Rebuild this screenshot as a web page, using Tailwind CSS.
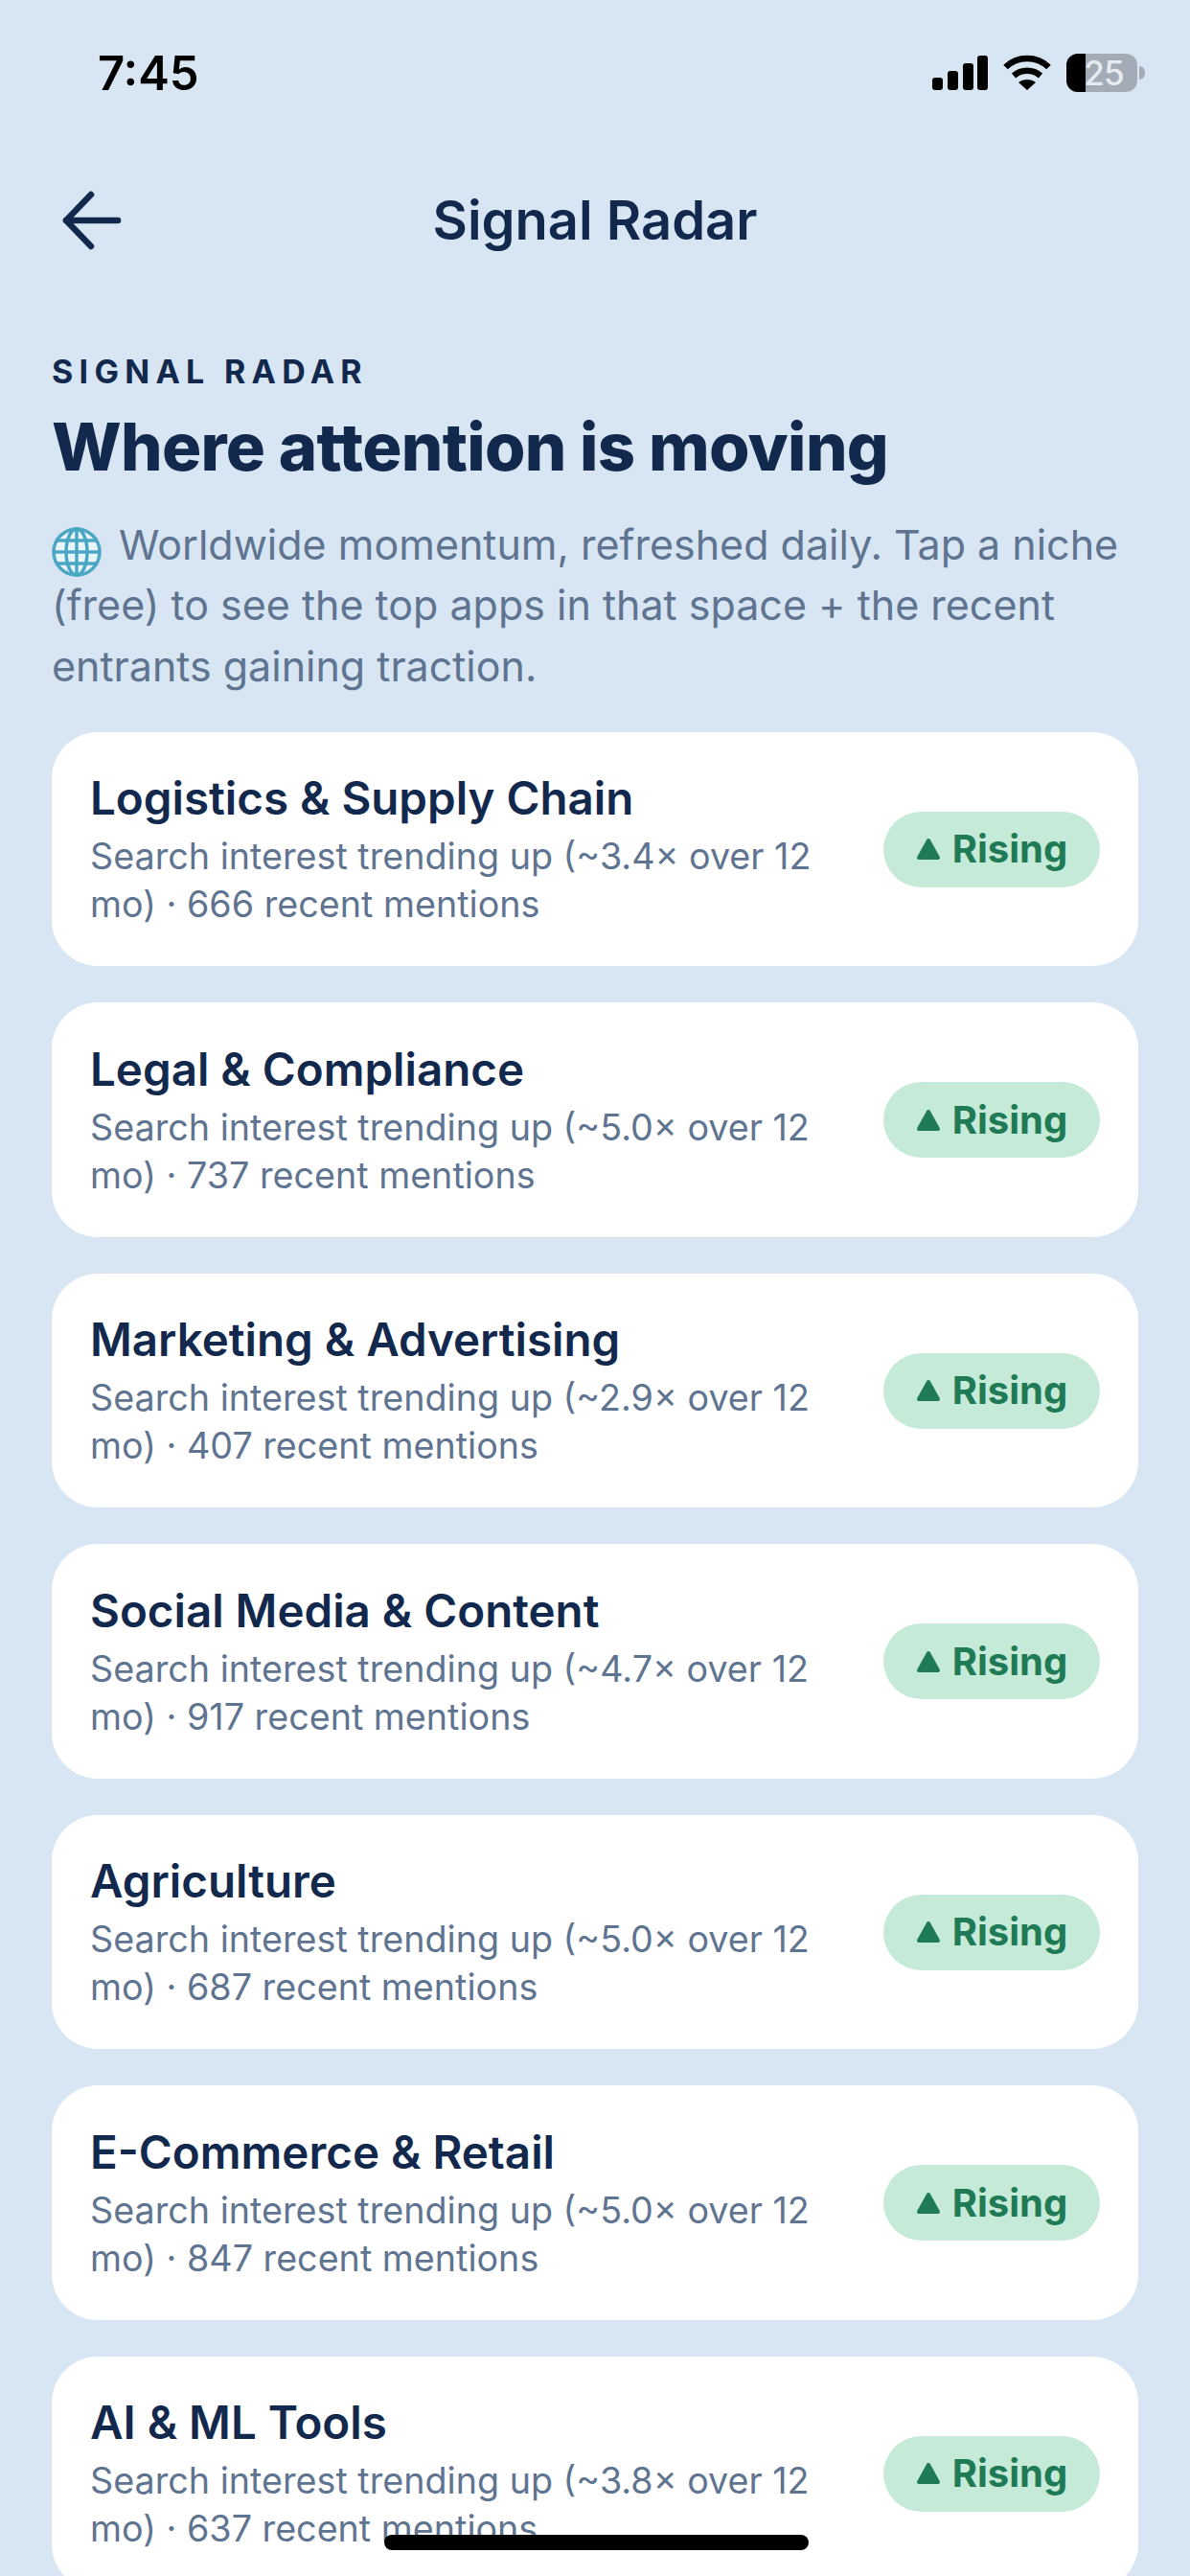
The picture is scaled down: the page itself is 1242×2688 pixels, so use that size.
<!DOCTYPE html>
<html lang="en">
  <head>
    <meta charset="UTF-8">
    <meta name="viewport" content="width=device-width, initial-scale=1.0">
    <title>Signal Radar</title>
    <script src="https://cdn.jsdelivr.net/npm/@tailwindcss/browser@4"></script>
  </head>
  <body class="font-['Inter',sans-serif]">
    <div class="relative h-[2688px] w-[1242px] overflow-hidden bg-[#d8e6f4]">
      <!-- status bar -->
      <div class="flex h-[152px] items-center justify-between pl-[102px] pr-[47px]">
        <span class="text-[49px] font-semibold leading-none text-black">7:45</span>
        <div class="flex items-center gap-[16px]">
          <svg width="58" height="36" viewBox="0 0 58 36" fill="#000">
            <rect x="0" y="23" width="11" height="13" rx="3"/>
            <rect x="16" y="16" width="11" height="20" rx="3"/>
            <rect x="32" y="8" width="11" height="28" rx="3"/>
            <rect x="47" y="0" width="11" height="36" rx="3"/>
          </svg>
          <svg width="50" height="38" viewBox="0 0 50 38" fill="none" stroke="#000" stroke-width="6.5">
            <path d="M2.5 13 C15 1 35 1 47.5 13"/>
            <path d="M11 22 C19 15 31 15 39 22"/>
            <path d="M25 37 L16 29 C21 25 29 25 34 29 Z" fill="#000" stroke="none"/>
          </svg>
          <div class="flex items-center gap-[2px]">
            <div class="relative flex h-[40px] w-[74px] items-center justify-end overflow-hidden rounded-[12px] bg-[#a3acb6] pr-[14px]">
              <div class="absolute inset-y-0 left-0 w-[20px] bg-black"></div>
              <span class="text-[35px] font-medium leading-none tracking-[-0.02em] text-[#e6ebf1]">25</span>
            </div>
            <div class="h-[14px] w-[6px] rounded-r-full bg-[#a3acb6]"></div>
          </div>
        </div>
      </div>

      <!-- nav -->
      <div class="relative flex h-[156px] items-center justify-center">
        <svg class="absolute left-[64px] top-[47px]" width="64" height="62" viewBox="0 0 64 62" fill="none" stroke="#12294d" stroke-width="6.5" stroke-linecap="round" stroke-linejoin="round">
          <path d="M31 4 L5 31 L31 58"/>
          <path d="M5 31 H59"/>
        </svg>
        <h1 class="text-[56px] font-semibold leading-none text-[#12294d]">Signal Radar</h1>
      </div>

      <div class="px-[54px]">
        <p class="mt-[63px] text-[34px] font-bold uppercase leading-none tracking-[0.185em] text-[#12294d]">Signal Radar</p>
        <h2 class="mt-[27px] text-[68.7px] font-extrabold leading-none tracking-[-0.01em] text-[#12294d]">Where attention is moving</h2>
        <p class="mt-[36px] text-[43px] leading-[63.4px] text-[#5f7490]">
          <svg class="mb-[-8px] mr-[6px] inline-block" width="52" height="52" viewBox="0 0 52 52" fill="#e8f5fb" stroke="#4ba6c4" stroke-width="3.5">
            <circle cx="26" cy="26" r="24"/>
            <ellipse cx="26" cy="26" rx="11" ry="24" fill="none"/>
            <path d="M26 2 V50 M2 26 H50 M6 14 H46 M6 38 H46" fill="none"/>
          </svg>
          Worldwide momentum, refreshed daily. Tap a niche (free) to see the top apps in that space + the recent entrants gaining traction.
        </p>

        <div class="mt-[37px] flex flex-col gap-[38px]">
          <div class="flex h-[244.5px] shrink-0 items-center gap-[36px] rounded-[48px] bg-white pl-[40px] pr-[40px]">
            <div class="min-w-0 flex-1">
              <p class="text-[47.5px] font-semibold leading-[58px] text-[#12294d]">Logistics &amp; Supply Chain</p>
              <p class="mt-[6px] text-[37.7px] leading-[50px] text-[#5f7490]">Search interest trending up (~3.4× over 12 mo) · 666 recent mentions</p>
            </div>
            <div class="flex h-[79px] w-[226px] shrink-0 items-center justify-center gap-[12px] rounded-full bg-[#c6ead8]">
              <svg width="26" height="24" viewBox="0 0 26 24" fill="#1f7a56" stroke="#1f7a56" stroke-width="4" stroke-linejoin="round"><path d="M13 3 L23 21 H3 Z"/></svg>
              <span class="text-[40px] font-bold leading-none text-[#1f7a56]">Rising</span>
            </div>
          </div>

          <div class="flex h-[244.5px] shrink-0 items-center gap-[36px] rounded-[48px] bg-white pl-[40px] pr-[40px]">
            <div class="min-w-0 flex-1">
              <p class="text-[47.5px] font-semibold leading-[58px] text-[#12294d]">Legal &amp; Compliance</p>
              <p class="mt-[6px] text-[37.7px] leading-[50px] text-[#5f7490]">Search interest trending up (~5.0× over 12 mo) · 737 recent mentions</p>
            </div>
            <div class="flex h-[79px] w-[226px] shrink-0 items-center justify-center gap-[12px] rounded-full bg-[#c6ead8]">
              <svg width="26" height="24" viewBox="0 0 26 24" fill="#1f7a56" stroke="#1f7a56" stroke-width="4" stroke-linejoin="round"><path d="M13 3 L23 21 H3 Z"/></svg>
              <span class="text-[40px] font-bold leading-none text-[#1f7a56]">Rising</span>
            </div>
          </div>

          <div class="flex h-[244.5px] shrink-0 items-center gap-[36px] rounded-[48px] bg-white pl-[40px] pr-[40px]">
            <div class="min-w-0 flex-1">
              <p class="text-[47.5px] font-semibold leading-[58px] text-[#12294d]">Marketing &amp; Advertising</p>
              <p class="mt-[6px] text-[37.7px] leading-[50px] text-[#5f7490]">Search interest trending up (~2.9× over 12 mo) · 407 recent mentions</p>
            </div>
            <div class="flex h-[79px] w-[226px] shrink-0 items-center justify-center gap-[12px] rounded-full bg-[#c6ead8]">
              <svg width="26" height="24" viewBox="0 0 26 24" fill="#1f7a56" stroke="#1f7a56" stroke-width="4" stroke-linejoin="round"><path d="M13 3 L23 21 H3 Z"/></svg>
              <span class="text-[40px] font-bold leading-none text-[#1f7a56]">Rising</span>
            </div>
          </div>

          <div class="flex h-[244.5px] shrink-0 items-center gap-[36px] rounded-[48px] bg-white pl-[40px] pr-[40px]">
            <div class="min-w-0 flex-1">
              <p class="text-[47.5px] font-semibold leading-[58px] text-[#12294d]">Social Media &amp; Content</p>
              <p class="mt-[6px] text-[37.7px] leading-[50px] text-[#5f7490]">Search interest trending up (~4.7× over 12 mo) · 917 recent mentions</p>
            </div>
            <div class="flex h-[79px] w-[226px] shrink-0 items-center justify-center gap-[12px] rounded-full bg-[#c6ead8]">
              <svg width="26" height="24" viewBox="0 0 26 24" fill="#1f7a56" stroke="#1f7a56" stroke-width="4" stroke-linejoin="round"><path d="M13 3 L23 21 H3 Z"/></svg>
              <span class="text-[40px] font-bold leading-none text-[#1f7a56]">Rising</span>
            </div>
          </div>

          <div class="flex h-[244.5px] shrink-0 items-center gap-[36px] rounded-[48px] bg-white pl-[40px] pr-[40px]">
            <div class="min-w-0 flex-1">
              <p class="text-[47.5px] font-semibold leading-[58px] text-[#12294d]">Agriculture</p>
              <p class="mt-[6px] text-[37.7px] leading-[50px] text-[#5f7490]">Search interest trending up (~5.0× over 12 mo) · 687 recent mentions</p>
            </div>
            <div class="flex h-[79px] w-[226px] shrink-0 items-center justify-center gap-[12px] rounded-full bg-[#c6ead8]">
              <svg width="26" height="24" viewBox="0 0 26 24" fill="#1f7a56" stroke="#1f7a56" stroke-width="4" stroke-linejoin="round"><path d="M13 3 L23 21 H3 Z"/></svg>
              <span class="text-[40px] font-bold leading-none text-[#1f7a56]">Rising</span>
            </div>
          </div>

          <div class="flex h-[244.5px] shrink-0 items-center gap-[36px] rounded-[48px] bg-white pl-[40px] pr-[40px]">
            <div class="min-w-0 flex-1">
              <p class="text-[47.5px] font-semibold leading-[58px] text-[#12294d]">E-Commerce &amp; Retail</p>
              <p class="mt-[6px] text-[37.7px] leading-[50px] text-[#5f7490]">Search interest trending up (~5.0× over 12 mo) · 847 recent mentions</p>
            </div>
            <div class="flex h-[79px] w-[226px] shrink-0 items-center justify-center gap-[12px] rounded-full bg-[#c6ead8]">
              <svg width="26" height="24" viewBox="0 0 26 24" fill="#1f7a56" stroke="#1f7a56" stroke-width="4" stroke-linejoin="round"><path d="M13 3 L23 21 H3 Z"/></svg>
              <span class="text-[40px] font-bold leading-none text-[#1f7a56]">Rising</span>
            </div>
          </div>

          <div class="flex h-[244.5px] shrink-0 items-center gap-[36px] rounded-[48px] bg-white pl-[40px] pr-[40px]">
            <div class="min-w-0 flex-1">
              <p class="text-[47.5px] font-semibold leading-[58px] text-[#12294d]">AI &amp; ML Tools</p>
              <p class="mt-[6px] text-[37.7px] leading-[50px] text-[#5f7490]">Search interest trending up (~3.8× over 12 mo) · 637 recent mentions</p>
            </div>
            <div class="flex h-[79px] w-[226px] shrink-0 items-center justify-center gap-[12px] rounded-full bg-[#c6ead8]">
              <svg width="26" height="24" viewBox="0 0 26 24" fill="#1f7a56" stroke="#1f7a56" stroke-width="4" stroke-linejoin="round"><path d="M13 3 L23 21 H3 Z"/></svg>
              <span class="text-[40px] font-bold leading-none text-[#1f7a56]">Rising</span>
            </div>
          </div>
        </div>
      </div>

      <!-- home indicator -->
      <div class="absolute bottom-[27px] left-[401px] h-[16px] w-[443px] rounded-full bg-black"></div>
    </div>
  </body>
</html>
